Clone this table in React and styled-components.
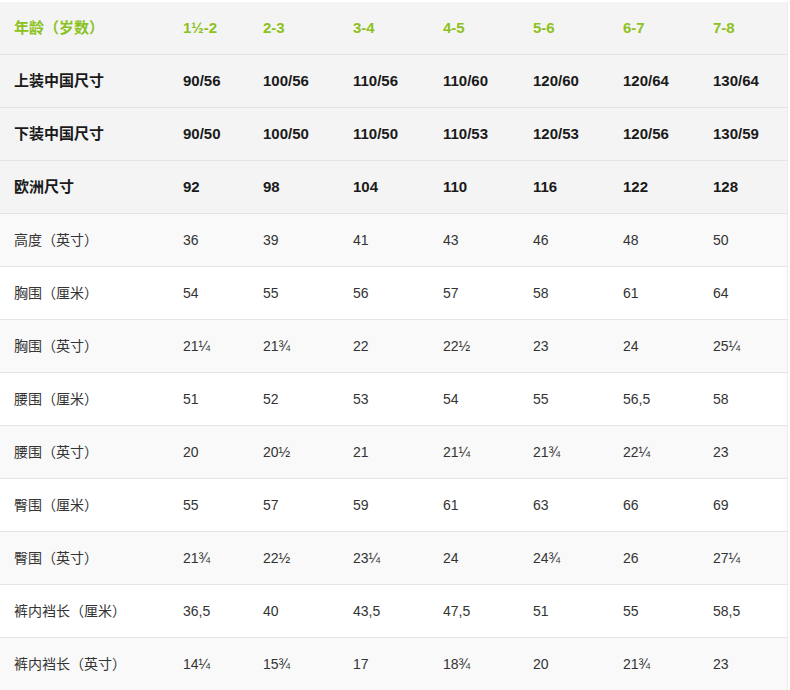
import React from "react";
import styled, { createGlobalStyle } from "styled-components";

const Global = createGlobalStyle`
  html, body { margin: 0; padding: 0; background: #fff; }
  body { font-family: "Liberation Sans", Arial, "Noto Sans CJK SC", sans-serif; }
`;

const Wrap = styled.div`
  padding-top: 2px;
  width: 788px;
`;

const Table = styled.table`
  border-collapse: collapse;
  table-layout: fixed;
  width: 787px;
  border-right: 1px solid #ececec;
`;

const Col = styled.col``;

const Row = styled.tr`
  background: ${(p) => p.$bg};
  border-bottom: 1px solid #e4e4e4;
  &:last-child { border-bottom: none; }
`;

const Cell = styled.td`
  height: 52px;
  padding: 0 0 0 14px;
  font-size: ${(p) => (p.$bold ? 15 : 14)}px;
  font-weight: ${(p) => (p.$bold ? 700 : 400)};
  color: ${(p) => (p.$green ? "#8cc21e" : p.$bold ? "#1a1a1a" : "#333")};
  white-space: nowrap;
  vertical-align: middle;
  line-height: 20px;
`;

const header = ["年龄（岁数）", "1½-2", "2-3", "3-4", "4-5", "5-6", "6-7", "7-8"];

const boldRows = [
  ["上装中国尺寸", "90/56", "100/56", "110/56", "110/60", "120/60", "120/64", "130/64"],
  ["下装中国尺寸", "90/50", "100/50", "110/50", "110/53", "120/53", "120/56", "130/59"],
  ["欧洲尺寸", "92", "98", "104", "110", "116", "122", "128"],
];

const rows = [
  ["高度（英寸）", "36", "39", "41", "43", "46", "48", "50"],
  ["胸围（厘米）", "54", "55", "56", "57", "58", "61", "64"],
  ["胸围（英寸）", "21¼", "21¾", "22", "22½", "23", "24", "25¼"],
  ["腰围（厘米）", "51", "52", "53", "54", "55", "56,5", "58"],
  ["腰围（英寸）", "20", "20½", "21", "21¼", "21¾", "22¼", "23"],
  ["臀围（厘米）", "55", "57", "59", "61", "63", "66", "69"],
  ["臀围（英寸）", "21¾", "22½", "23¼", "24", "24¾", "26", "27¼"],
  ["裤内裆长（厘米）", "36,5", "40", "43,5", "47,5", "51", "55", "58,5"],
  ["裤内裆长（英寸）", "14¼", "15¾", "17", "18¾", "20", "21¾", "23"],
];

const widths = [169, 80, 90, 90, 90, 90, 90, 88];

export default function App() {
  return (
    <Wrap>
      <Global />
      <Table>
        <colgroup>
          {widths.map((w, i) => (
            <Col key={i} style={{ width: w }} />
          ))}
        </colgroup>
        <tbody>
          <Row $bg="#f4f4f4">
            {header.map((h, i) => (
              <Cell key={i} $bold $green>
                {h}
              </Cell>
            ))}
          </Row>
          {boldRows.map((r, ri) => (
            <Row key={"b" + ri} $bg="#f4f4f4">
              {r.map((c, i) => (
                <Cell key={i} $bold>
                  {c}
                </Cell>
              ))}
            </Row>
          ))}
          {rows.map((r, ri) => (
            <Row key={"r" + ri} $bg={ri % 2 === 0 ? "#f9f9f9" : "#ffffff"}>
              {r.map((c, i) => (
                <Cell key={i}>{c}</Cell>
              ))}
            </Row>
          ))}
        </tbody>
      </Table>
    </Wrap>
  );
}
